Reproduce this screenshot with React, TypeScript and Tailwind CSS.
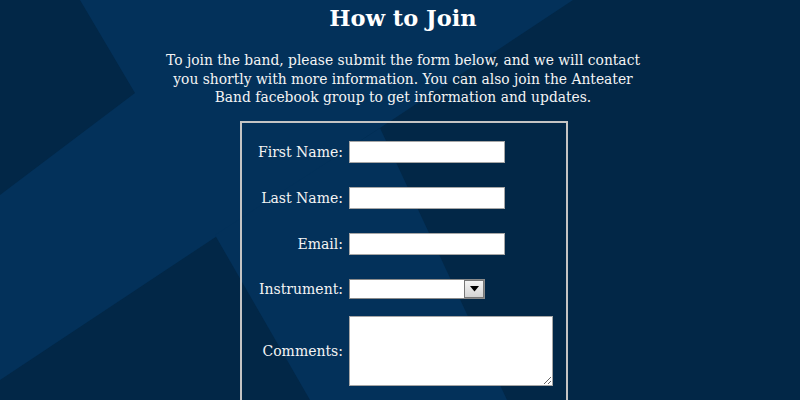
import React from "react";

const serif = { fontFamily: '"DejaVu Serif", Georgia, serif' };

function Row({ label, children }: { label: string; children: React.ReactNode }) {
  return (
    <div className="flex items-center">
      <div className="w-[101px] text-right text-[14px] text-[#f4f4f4] leading-none">{label}</div>
      <div className="ml-[6px]">{children}</div>
    </div>
  );
}

export default function App() {
  return (
    <div className="relative w-[800px] h-[400px] overflow-hidden bg-[#022747]" style={serif}>
      <svg className="absolute inset-0" width="800" height="400" viewBox="0 0 800 400">
        <rect width="800" height="400" fill="#022747" />
        <polygon points="80,0 573,0 0,380 0,195 135,93" fill="#03315a" />
        <polygon points="215,235 380,128 507,400 310,400" fill="#03315a" />
      </svg>
      <div className="relative flex flex-col items-center">
        <h1 className="mt-[4px] text-[22.5px] font-bold text-white leading-[28px] pl-[6px]">How to Join</h1>
        <p className="mt-[19px] text-center text-[13.85px] leading-[18.5px] text-[#f4f4f4] pl-[6px]">
          To join the band, please submit the form below, and we will contact
          <br />
          you shortly with more information. You can also join the Anteater
          <br />
          Band facebook group to get information and updates.
        </p>
        <div className="mt-[14px] w-[328px] h-[300px] ml-[8px] border-2 border-[#c4c4c4] pt-[18px]">
          <div className="flex flex-col">
            <Row label="First Name:">
              <input className="block w-[156px] h-[22px] bg-white border border-[#a6a6a6] outline-none" />
            </Row>
            <div className="h-[24px]" />
            <Row label="Last Name:">
              <input className="block w-[156px] h-[22px] bg-white border border-[#a6a6a6] outline-none" />
            </Row>
            <div className="h-[24px]" />
            <Row label="Email:">
              <input className="block w-[156px] h-[22px] bg-white border border-[#a6a6a6] outline-none" />
            </Row>
            <div className="h-[24px]" />
            <Row label="Instrument:">
              <div className="relative w-[136px] h-[20px] bg-white border border-[#8a8a8a]">
                <div className="absolute right-0 top-0 w-[20px] h-[18px] border border-[#777] bg-gradient-to-b from-[#f4f4f4] to-[#d4d4d4] flex items-center justify-center">
                  <svg width="9" height="6" viewBox="0 0 9 6">
                    <polygon points="0,0 9,0 4.5,5.5" fill="#000" />
                  </svg>
                </div>
              </div>
            </Row>
            <div className="h-[17px]" />
            <Row label="Comments:">
              <textarea className="block w-[204px] h-[70px] bg-white border border-[#a6a6a6] outline-none" />
            </Row>
          </div>
        </div>
      </div>
    </div>
  );
}
